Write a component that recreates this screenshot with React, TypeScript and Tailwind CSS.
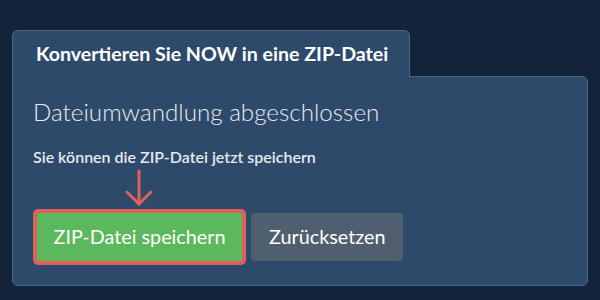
import React from 'react';

const DownArrow = () => (
    <svg width="30" height="40" viewBox="0 0 30 40" className="ml-[91px] block" fill="none">
        <path d="M15 2 L15 35" stroke="#e0605c" strokeWidth="3" strokeLinecap="round" />
        <path d="M3 23 L15 35 L27 23" stroke="#e0605c" strokeWidth="3" strokeLinecap="round" strokeLinejoin="round" />
    </svg>
);

export default function App() {
    return (
        <div className="w-[600px] h-[300px] bg-[#12233a] px-3 pt-[30px] font-['Lato','Noto_Sans',sans-serif] overflow-hidden">
            {/* tab header */}
            <div className="relative z-10 -mb-px inline-flex h-[47px] items-center rounded-t-md border border-b-0 border-[#4b6788] bg-[#2d4a6b] pl-[23px] pr-[21px]">
                <span className="text-[19.6px] font-bold text-white">Konvertieren Sie NOW in eine ZIP-Datei</span>
            </div>

            {/* panel */}
            <div className="w-[576px] rounded-b-md rounded-tr-md border border-[#4b6788] bg-[#2d4a6b] pl-5 pt-5 pb-5">
                <h2 className="text-[24.2px] font-light leading-[29px] text-[#e8ecf0]">Dateiumwandlung abgeschlossen</h2>
                <p className="mt-[21px] text-[16px] font-semibold leading-5 text-[#e6e9ee]">Sie können die ZIP-Datei jetzt speichern</p>
                <div className="mt-[2px]">
                    <DownArrow />
                </div>
                <div className="flex items-center gap-[5px]">
                    <button className="h-[56px] w-[213px] rounded-[5px] border-4 border-[#e0605c] bg-[#5cb85c] text-[19.8px] text-white">
                        ZIP-Datei speichern
                    </button>
                    <button className="h-[48px] rounded-[4px] bg-[#4f5f70] px-[18px] text-[19.8px] text-white">
                        Zurücksetzen
                    </button>
                </div>
            </div>
        </div>
    );
}
